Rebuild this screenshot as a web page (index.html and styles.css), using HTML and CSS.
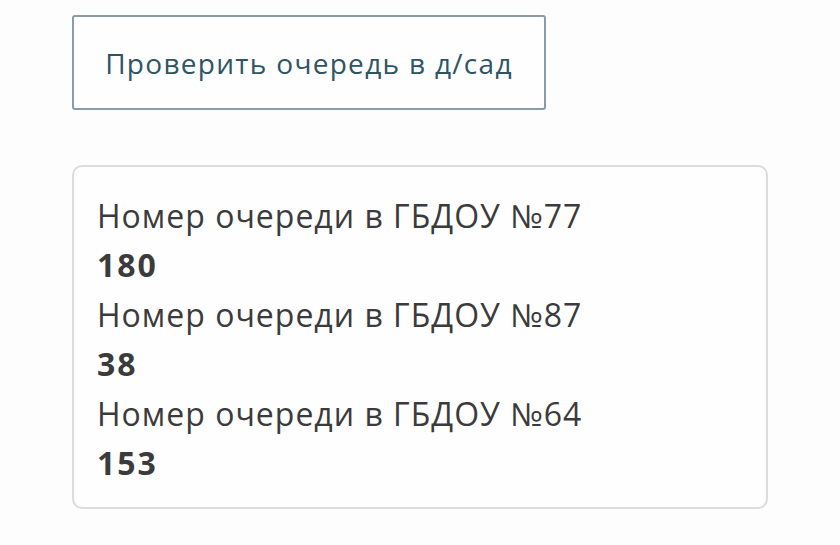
FILE: index.html
```html
<!DOCTYPE html>
<html lang="ru">
<head>
<meta charset="utf-8">
<link rel="stylesheet" href="styles.css">
</head>
<body>
<div class="page">
  <button class="check-btn">Проверить очередь в д/сад</button>
  <div class="queue-card">
    <div class="q-label">Номер очереди в ГБДОУ №77</div>
    <div class="q-value">180</div>
    <div class="q-label">Номер очереди в ГБДОУ №87</div>
    <div class="q-value">38</div>
    <div class="q-label">Номер очереди в ГБДОУ №64</div>
    <div class="q-value">153</div>
  </div>
</div>
</body>
</html>
```
FILE: styles.css
```css
html, body {
  margin: 0;
  padding: 0;
  background: #fdfdfd;
}
.page {
  display: flex;
  flex-direction: column;
  align-items: flex-start;
  padding: 15px 72px 0 72px;
  font-family: "Open Sans", "Noto Sans", sans-serif;
}
.check-btn {
  width: 474px;
  height: 95px;
  box-sizing: border-box;
  border: 2px solid #8b9ca8;
  border-radius: 3px;
  background: #fefefe;
  color: #2f5565;
  font-family: inherit;
  font-size: 28px;
  padding: 0;
  letter-spacing: 1.3px;
}
.queue-card {
  margin-top: 55px;
  width: 696px;
  height: 344px;
  box-sizing: border-box;
  border: 2px solid #dcdcdc;
  border-radius: 10px;
  background: #fefefe;
  padding: 24px 23px;
  color: #3b3b3b;
}
.q-label {
  font-size: 32px;
  line-height: 49.4px;
  letter-spacing: 1px;
}
.q-value {
  font-size: 32px;
  line-height: 49.4px;
  font-weight: 700;
  letter-spacing: 2px;
}
```
